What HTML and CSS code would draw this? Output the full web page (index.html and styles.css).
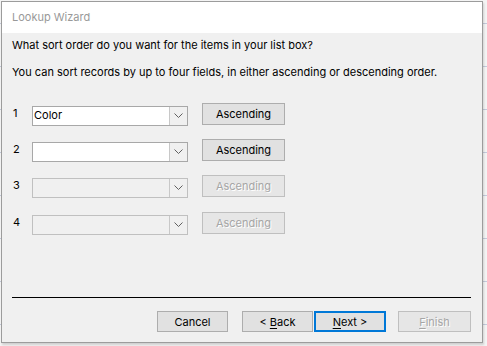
FILE: index.html
```html
<!DOCTYPE html>
<html>
<head>
<meta charset="utf-8">
<link rel="stylesheet" href="styles.css">
</head>
<body>
<div class="dialog">
  <div class="titlebar">Lookup Wizard</div>
  <div class="content">
    <p class="prompt first">What sort order do you want for the items in your list box?</p>
    <p class="prompt second">You can sort records by up to four fields, in either ascending or descending order.</p>
    <div class="rows">
      <div class="row">
        <span class="num">1</span>
        <div class="combo"><span class="value">Color</span><span class="drop"><svg width="9" height="5" viewBox="0 0 9 5"><path d="M0.5 0.5 L4.5 4.5 L8.5 0.5" fill="none" stroke="#606060" stroke-width="1"/></svg></span></div>
        <button class="btn sort">Ascending</button>
      </div>
      <div class="row">
        <span class="num">2</span>
        <div class="combo"><span class="value"></span><span class="drop"><svg width="9" height="5" viewBox="0 0 9 5"><path d="M0.5 0.5 L4.5 4.5 L8.5 0.5" fill="none" stroke="#606060" stroke-width="1"/></svg></span></div>
        <button class="btn sort">Ascending</button>
      </div>
      <div class="row">
        <span class="num">3</span>
        <div class="combo disabled"><span class="value"></span><span class="drop"><svg width="9" height="5" viewBox="0 0 9 5"><path d="M0.5 0.5 L4.5 4.5 L8.5 0.5" fill="none" stroke="#606060" stroke-width="1"/></svg></span></div>
        <button class="btn sort disabled">Ascending</button>
      </div>
      <div class="row last">
        <span class="num">4</span>
        <div class="combo disabled"><span class="value"></span><span class="drop"><svg width="9" height="5" viewBox="0 0 9 5"><path d="M0.5 0.5 L4.5 4.5 L8.5 0.5" fill="none" stroke="#606060" stroke-width="1"/></svg></span></div>
        <button class="btn sort disabled">Ascending</button>
      </div>
    </div>
    <div class="separator"></div>
    <div class="footer">
      <button class="btn cancel">Cancel</button>
      <button class="btn back">&lt; <u>B</u>ack</button>
      <button class="btn next default"><u>N</u>ext &gt;</button>
      <button class="btn finish disabled"><u>F</u>inish</button>
    </div>
  </div>
</div>
</body>
</html>
```

FILE: styles.css
```css
html, body {
  margin: 0;
  padding: 0;
}
body {
  width: 487px;
  height: 346px;
  overflow: hidden;
  background-color: #f4f4f4;
  background-image: repeating-linear-gradient(to bottom, transparent 0, transparent 23px, #c4cadb 23px, #c4cadb 24px, transparent 24px, transparent 43px);
  font-family: "Inter", "Segoe UI", sans-serif;
  font-size: 11px;
  color: #000;
}
.dialog {
  margin: 1px 0 0 1px;
  width: 480px;
  height: 340px;
  border: 1px solid #9c9c9c;
  box-shadow: 1px 2px 2px rgba(0, 0, 0, 0.15);
  display: flex;
  flex-direction: column;
}
.titlebar {
  height: 31px;
  line-height: 30px;
  padding-left: 10px;
  background: #ffffff;
  color: #999999;
  font-size: 11px;
}
.content {
  flex: 1;
  background: #f0f0f0;
  display: flex;
  flex-direction: column;
  padding: 0 11px 0 10px;
}
.prompt {
  margin: 0;
  line-height: 16px;
  white-space: nowrap;
}
.prompt.first {
  margin-top: 4px;
}
.prompt.second {
  margin-top: 11px;
}
.rows {
  margin-top: 23px;
  display: flex;
  flex-direction: column;
  gap: 14px;
}
.row {
  display: flex;
  align-items: center;
  height: 22px;
}
.row.last {
  margin-top: 1px;
}
.num {
  width: 20px;
  padding-left: 1px;
  box-sizing: border-box;
  line-height: 16px;
  margin-top: -3px;
}
.combo {
  width: 156px;
  height: 20px;
  box-sizing: border-box;
  border: 1px solid #a8a8a8;
  background: #ffffff;
  display: flex;
  margin-top: 3px;
}
.combo .value {
  flex: 1;
  padding-left: 1px;
  line-height: 16px;
}
.combo .drop {
  width: 17px;
  border-left: 1px solid #c8c8c8;
  background: #f0f0f0;
  display: flex;
  align-items: center;
  justify-content: center;
}
.combo.disabled {
  background: #f0f0f0;
  border-color: #c0c0c0;
}
.btn {
  font-family: inherit;
  font-size: 11px;
  color: #000;
  background: #e1e1e1;
  border: 1px solid #adadad;
  padding: 0;
  margin: 0;
  box-sizing: border-box;
  line-height: 16px;
}
.btn u {
  text-decoration-thickness: 1px;
  text-underline-offset: 2px;
}
.btn.sort {
  width: 83px;
  height: 22px;
  margin-left: 14px;
}
.btn.disabled {
  color: #a6a6a6;
  border-color: #bfbfbf;
  background: #e6e6e6;
  text-shadow: 1px 1px 0 #ffffff;
}
.separator {
  margin-top: 63px;
  height: 1px;
  background: #000;
}
.footer {
  display: flex;
  margin-top: 13px;
  justify-content: flex-end;
}
.footer .btn {
  height: 21px;
}
.cancel {
  width: 71px;
}
.back {
  width: 71px;
  margin-left: 14px;
}
.next {
  width: 72px;
  margin-left: 1px;
}
.next.default {
  border: 2px solid #0078d7;
}
.finish {
  width: 73px;
  margin-left: 12px;
}
```
